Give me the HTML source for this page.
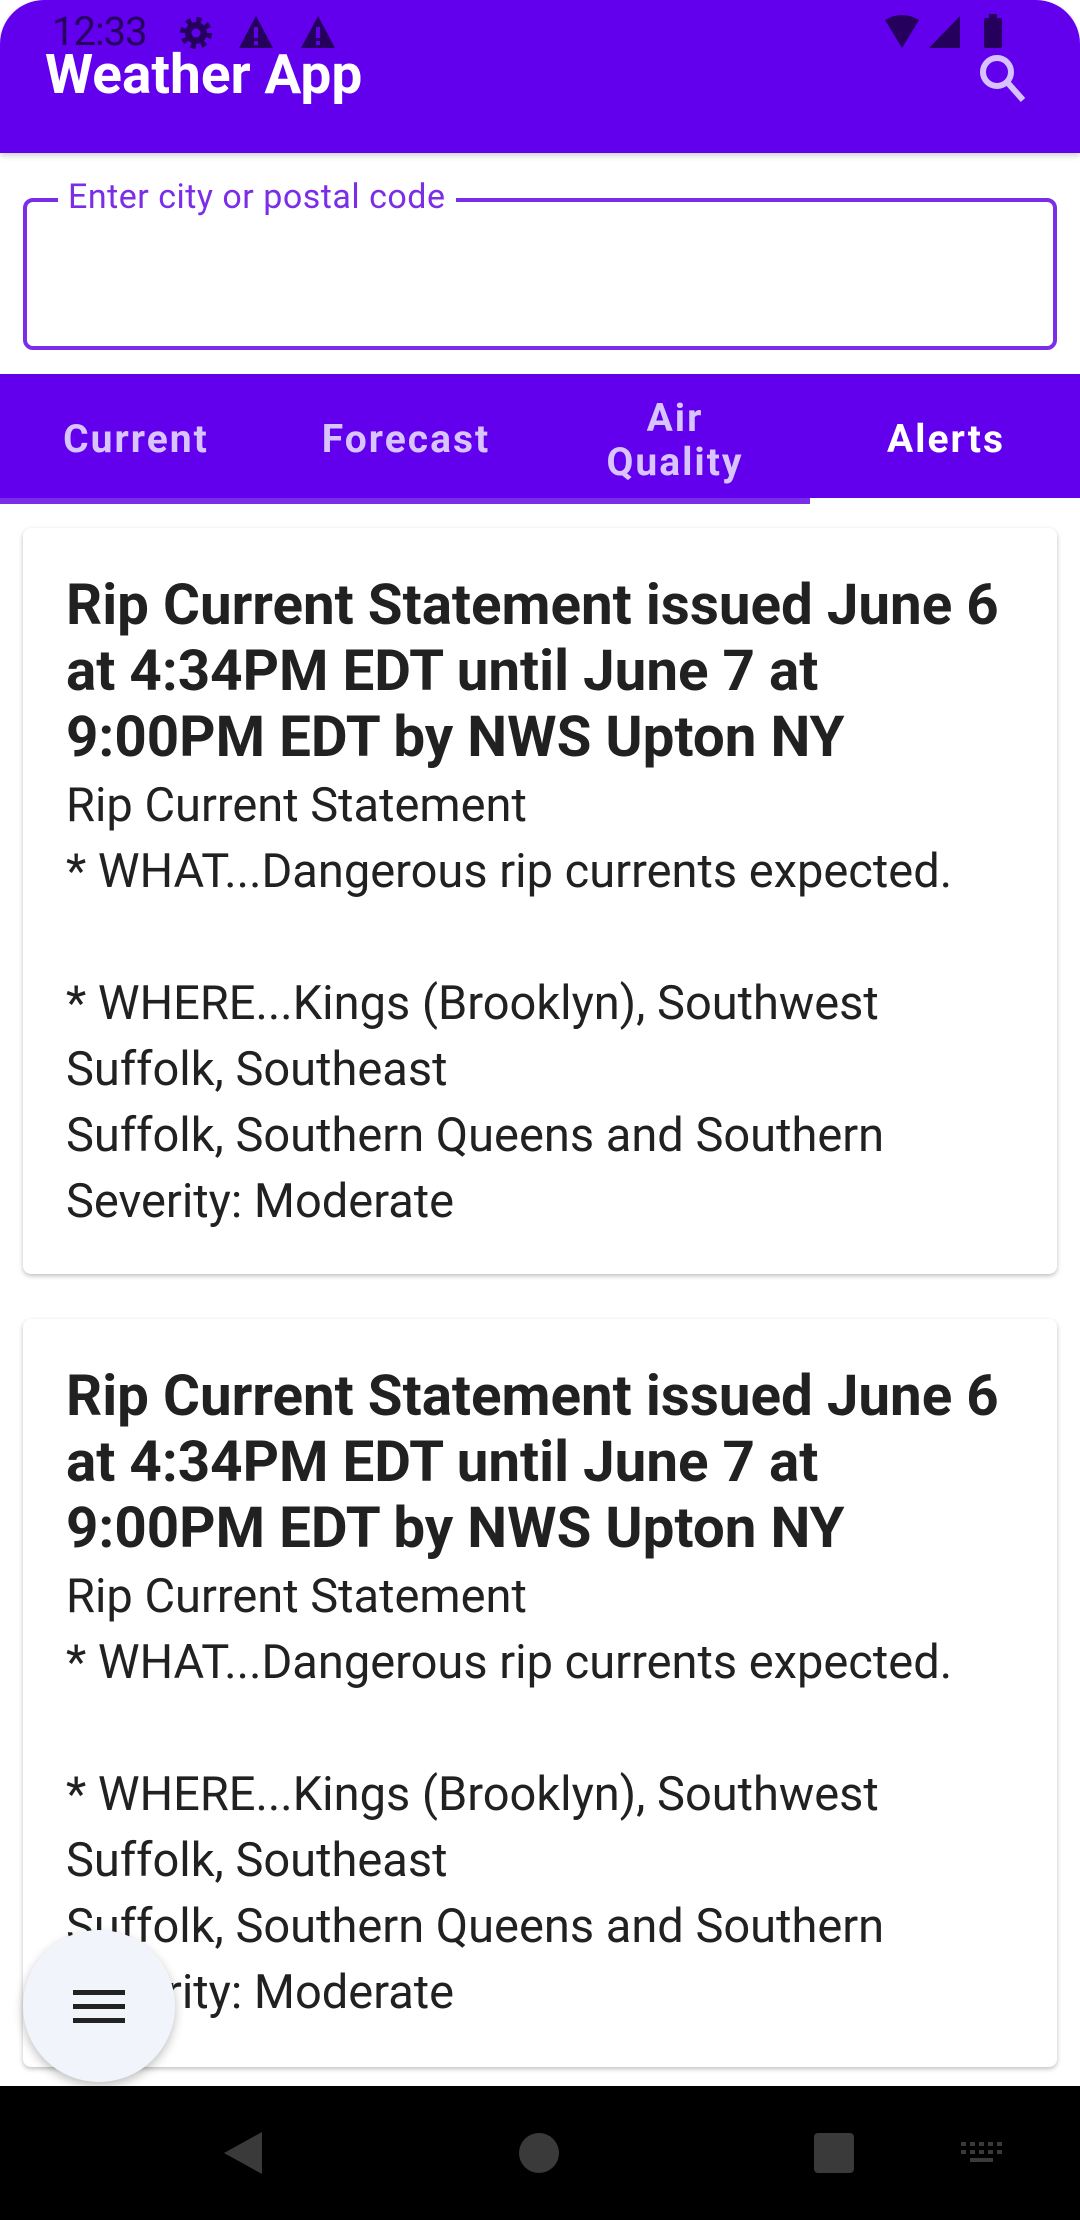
<!DOCTYPE html>
<html><head><meta charset="utf-8"><style>
*{margin:0;padding:0;box-sizing:border-box}
body{width:1080px;height:2220px;background:#fff;position:relative;overflow:hidden;font-family:"Roboto","Liberation Sans",sans-serif}
.abs{position:absolute}
.appbar{left:0;top:0;width:1080px;height:153px;background:#6200ee;border-radius:44px 44px 0 0;box-shadow:0 3px 6px rgba(0,0,0,.18)}
.time{left:52px;top:8px;font-size:40px;color:#25005c;letter-spacing:-1px}
.title{left:45px;top:43px;font-size:55px;font-weight:bold;color:#fff}
.field{left:23px;top:198px;width:1034px;height:152px;border:4px solid #7a2ee8;border-radius:10px}
.label{left:58px;top:177px;padding:0 10px;background:#fff;font-size:34px;color:#7a2ee8;letter-spacing:0.5px}
.tabs{left:0;top:374px;width:1080px;height:124px;background:#6200ee}
.tab{position:absolute;font-size:39px;font-weight:bold;letter-spacing:2px;color:#d8c4ff;text-align:center;transform:translateX(-50%);line-height:44px}
.card{left:23px;width:1034px;background:#fff;border-radius:8px;box-shadow:0 2px 5px rgba(0,0,0,.25);padding:44px 10px 0 43px}
.h{font-size:56.5px;font-weight:bold;line-height:66px;color:#212121;white-space:nowrap}
.b{font-size:47px;line-height:66px;color:#212121;white-space:nowrap}
.b1{margin-top:3px}
.nav{left:0;top:2086px;width:1080px;height:134px;background:#000}
</style></head><body>
<div class="abs appbar"></div>
<div class="abs time">12:33</div>
<svg class="abs" style="left:84px;top:14px" width="260" height="40" viewBox="0 0 260 40">
<g fill="#25005c">
<circle cx="112" cy="19" r="11"/>
<circle cx="112" cy="19" r="13" fill="none" stroke="#25005c" stroke-width="6" stroke-dasharray="5 5.2"/>
<circle cx="112" cy="19" r="4.5" fill="#6200ee"/>
<path d="M172 2 L189 34 L155 34 Z"/><path d="M234 2 L251 34 L217 34 Z"/>
</g>
<g fill="#6200ee"><rect x="170" y="13" width="4" height="11"/><rect x="170" y="27" width="4" height="4"/><rect x="232" y="13" width="4" height="11"/><rect x="232" y="27" width="4" height="4"/></g>
</svg>
<svg class="abs" style="left:880px;top:14px" width="140" height="36" viewBox="0 0 140 36">
<g fill="#25005c"><path d="M5 6 Q22 -4 39 6 L22 34 Z"/><path d="M80 2 L80 34 L49 34 Z"/><rect x="104" y="4" width="18" height="30" rx="2"/><rect x="109" y="0" width="8" height="5"/></g>
</svg>
<div class="abs title">Weather App</div>
<svg class="abs" style="left:975px;top:50px" width="56" height="56" viewBox="0 0 56 56"><circle cx="22" cy="22" r="14" fill="none" stroke="#d6c2ff" stroke-width="6"/><path d="M32 32 L48 50" stroke="#d6c2ff" stroke-width="6"/></svg>
<div class="abs field"></div>
<div class="abs label">Enter city or postal code</div>
<div class="abs tabs">
<div class="tab" style="left:136px;top:43px">Current</div>
<div class="tab" style="left:406px;top:43px">Forecast</div>
<div class="tab" style="left:675px;top:22px">Air<br>Quality</div>
<div class="tab" style="left:946px;top:43px;color:#fff">Alerts</div>
</div>
<div class="abs" style="left:0;top:498px;width:810px;height:6px;background:#7a2ee8"></div>
<div class="abs card" style="top:528px;height:746px">
<div class="h">Rip Current Statement issued June 6</div>
<div class="h">at 4:34PM EDT until June 7 at</div>
<div class="h">9:00PM EDT by NWS Upton NY</div>
<div class="b b1">Rip Current Statement</div>
<div class="b">* WHAT...Dangerous rip currents expected.</div>
<div class="b">&nbsp;</div>
<div class="b">* WHERE...Kings (Brooklyn), Southwest</div>
<div class="b">Suffolk, Southeast</div>
<div class="b">Suffolk, Southern Queens and Southern</div>
<div class="b">Severity: Moderate</div>
</div>
<div class="abs card" style="top:1319px;height:748px">
<div class="h">Rip Current Statement issued June 6</div>
<div class="h">at 4:34PM EDT until June 7 at</div>
<div class="h">9:00PM EDT by NWS Upton NY</div>
<div class="b b1">Rip Current Statement</div>
<div class="b">* WHAT...Dangerous rip currents expected.</div>
<div class="b">&nbsp;</div>
<div class="b">* WHERE...Kings (Brooklyn), Southwest</div>
<div class="b">Suffolk, Southeast</div>
<div class="b">Suffolk, Southern Queens and Southern</div>
<div class="b">Severity: Moderate</div>
</div>
<div class="abs" style="left:23px;top:1930px;width:152px;height:152px;border-radius:50%;background:#f1f5fb;box-shadow:0 4px 10px rgba(0,0,0,.25)"></div>
<svg class="abs" style="left:73px;top:1986px" width="52" height="40" viewBox="0 0 52 40"><g fill="#222"><rect x="0" y="4" width="52" height="5"/><rect x="0" y="18" width="52" height="5"/><rect x="0" y="32" width="52" height="5"/></g></svg>
<div class="abs nav"></div>
<svg class="abs" style="left:0;top:2086px" width="1080" height="134" viewBox="0 0 1080 134">
<g fill="#3a3a3a"><path d="M262 46 L262 88 L224 67 Z"/><circle cx="539" cy="67" r="20"/><rect x="814" y="47" width="40" height="40" rx="4"/>
<g transform="translate(961,56)"><rect x="0" y="0" width="5" height="4"/><rect x="9" y="0" width="5" height="4"/><rect x="18" y="0" width="5" height="4"/><rect x="27" y="0" width="5" height="4"/><rect x="36" y="0" width="5" height="4"/><rect x="0" y="8" width="5" height="4"/><rect x="9" y="8" width="5" height="4"/><rect x="18" y="8" width="5" height="4"/><rect x="27" y="8" width="5" height="4"/><rect x="36" y="8" width="5" height="4"/><rect x="9" y="16" width="23" height="4"/></g></g>
</svg>
</body></html>
